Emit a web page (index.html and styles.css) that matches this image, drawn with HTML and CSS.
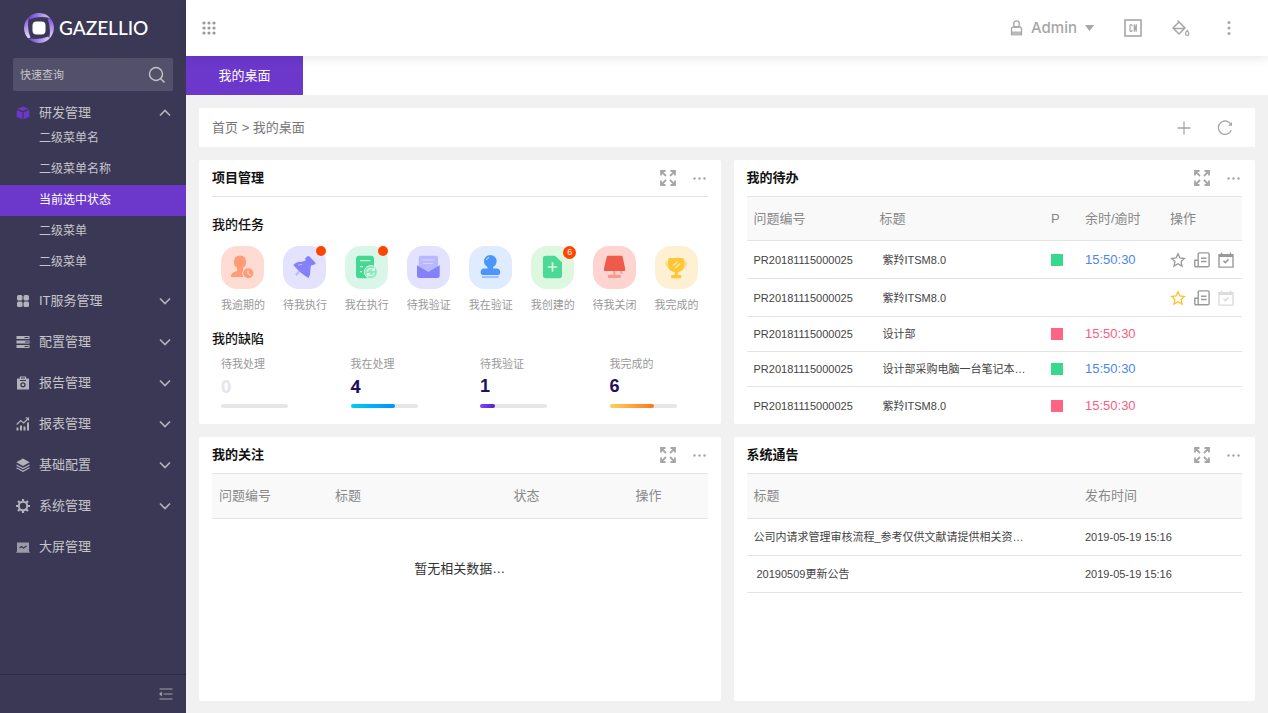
FILE: index.html
```html
<!DOCTYPE html>
<html lang="zh-CN">
<head>
<meta charset="utf-8">
<meta name="viewport" content="width=device-width, initial-scale=1">
<title>我的桌面</title>
<link rel="stylesheet" href="styles.css">
</head>
<body>
<svg class="sprite" aria-hidden="true">
  <symbol id="chevron" viewBox="0 0 12 8"><path d="M1 1.500 6 6.500l5-5" fill="none" stroke="currentColor" stroke-width="1.700"/></symbol>
  <symbol id="expand" viewBox="0 0 16 16"><path d="M1 5.500V1h4.500M1 1l5 5M10.500 1H15v4.500M15 1l-5 5M1 10.500V15h4.500M1 15l5-5M10.500 15H15v-4.500M15 15l-5-5" fill="none" stroke="currentColor" stroke-width="1.800"/></symbol>
  <symbol id="more" viewBox="0 0 13 3"><circle cx="1.500" cy="1.500" r="1.200"/><circle cx="6.500" cy="1.500" r="1.200"/><circle cx="11.500" cy="1.500" r="1.200"/></symbol>
  <symbol id="star" viewBox="0 0 16 16"><path d="m8 1.800 1.900 4.200 4.500.5-3.300 3.100.9 4.500L8 11.800l-4 2.300.9-4.500L1.600 6.500 6.100 6z" fill="none" stroke="currentColor" stroke-width="1.300"/></symbol>
  <symbol id="note" viewBox="0 0 16 16"><path d="M4.200 14.800V2.200q0-1.300 1.300-1.300h8.300q1.300 0 1.300 1.300v11.300q0 1.300-1.300 1.300H2q-1.200 0-1.200-1.300V8.300h3.400M7 6.200h5.500M7 9.500h5.500" fill="none" stroke="currentColor" stroke-width="1.400"/></symbol>
  <symbol id="calendar" viewBox="0 0 16 16"><path d="M1 2.800h14v12.300H1zM1 4.200h14M3.500.5v3M12.500.5v3" fill="none" stroke="currentColor" stroke-width="1.400"/><path d="m5.500 8.800 1.800 1.800 3.200-3.200" fill="none" stroke="currentColor" stroke-width="1.500"/></symbol>
</svg>

<aside class="sidebar">
  <div class="logo">
    <svg width="32" height="32" viewBox="0 0 32 32" aria-hidden="true">
      <defs>
        <linearGradient id="ringA" x1="0" y1="0" x2="1" y2="0"><stop offset="0" stop-color="#6b3fd6"/><stop offset="1" stop-color="#d6caf5"/></linearGradient>
        <linearGradient id="ringB" x1="0" y1="1" x2="0" y2="0"><stop offset="0" stop-color="#e4dcf9"/><stop offset="1" stop-color="#7a50dc"/></linearGradient>
      </defs>
      <path d="M5.800 5A15 15 0 0 1 27 6Q16 3.500 6.500 7.500z" fill="url(#ringA)"/>
      <path d="M27 5.800A15 15 0 0 1 26 27Q28.500 16 24.500 6.500z" fill="url(#ringB)"/>
      <path d="M26.200 27A15 15 0 0 1 5 26Q16 28.500 25.500 24.500z" fill="url(#ringA)"/>
      <path d="M5 26.200A15 15 0 0 1 6 5Q3.500 16 7.500 25.500z" fill="url(#ringB)"/>
      <rect x="9.500" y="9.500" width="13" height="13" rx="4" fill="#fff"/>
    </svg>
    <span>GAZELLIO</span>
  </div>

  <form class="search">
    <input type="search" aria-label="快速查询" placeholder="快速查询">
    <button type="submit" aria-label="搜索"><svg width="18" height="18" viewBox="0 0 18 18" fill="none" stroke="currentColor" stroke-width="1.400"><circle cx="8" cy="8" r="6.500"/><path d="m12.700 12.700 3.800 3.800"/></svg></button>
  </form>

  <nav class="menu" aria-label="主菜单">
    <button class="group group-open" type="button" aria-expanded="true">
      <svg class="gi gi-on" viewBox="0 0 14 14" fill="currentColor"><path d="m7 .5 5.500 2.300L7 5 1.500 2.800zM.7 4 6.400 6.300v7L.7 10.700zM13.300 4 7.600 6.300v7l5.700-2.600z"/></svg>
      <span>研发管理</span><svg class="chev up"><use href="#chevron"/></svg>
    </button>
    <ul class="sub">
      <li><a href="#">二级菜单名</a></li>
      <li><a href="#">二级菜单名称</a></li>
      <li><a class="current" href="#" aria-current="page">当前选中状态</a></li>
      <li><a href="#">二级菜单</a></li>
      <li><a href="#">二级菜单</a></li>
    </ul>
    <button class="group" type="button">
      <svg class="gi" viewBox="0 0 14 14" fill="currentColor"><rect x="1" y="1" width="5.500" height="5.500" rx="1.500"/><rect x="7.500" y="1" width="5.500" height="5.500" rx="1.500"/><rect x="1" y="7.500" width="5.500" height="5.500" rx="1.500"/><rect x="7.500" y="7.500" width="5.500" height="5.500" rx="1.500"/></svg>
      <span>IT服务管理</span><svg class="chev"><use href="#chevron"/></svg>
    </button>
    <button class="group" type="button">
      <svg class="gi" viewBox="0 0 14 14"><path d="M.5 2.500h13M.5 7h13M.5 11.500h13" stroke="currentColor" stroke-width="3"/><path d="M8.500 2.500h4M9 7h4M8.500 11.500h4" stroke="#3b3856" stroke-width="1"/></svg>
      <span>配置管理</span><svg class="chev"><use href="#chevron"/></svg>
    </button>
    <button class="group" type="button">
      <svg class="gi" viewBox="0 0 14 14"><path d="M1 2.500h12v11H1z" fill="currentColor"/><path d="M4.500 3.500V1h5v2.500" fill="none" stroke="currentColor" stroke-width="1.200"/><path d="M4 4.500h6" stroke="#3b3856"/><circle cx="7" cy="8.800" r="2" fill="none" stroke="#3b3856" stroke-width="1.300"/></svg>
      <span>报告管理</span><svg class="chev"><use href="#chevron"/></svg>
    </button>
    <button class="group" type="button">
      <svg class="gi" viewBox="0 0 14 14"><path d="M1.500 10.500v3M5 8.500v5M8.500 9.500v4M12 5.500v8" stroke="currentColor" stroke-width="2"/><path d="m.7 7.500 4-4 3 2.500 4.500-4.500M9.500 1h3v2.500" fill="none" stroke="currentColor" stroke-width="1.200"/></svg>
      <span>报表管理</span><svg class="chev"><use href="#chevron"/></svg>
    </button>
    <button class="group" type="button">
      <svg class="gi" viewBox="0 0 14 14"><path d="m7 .5 6.700 3.700L7 8 .3 4.200z" fill="currentColor"/><path d="M.5 7 7 10.500 13.500 7M.5 9.800 7 13.300l6.500-3.500" fill="none" stroke="currentColor" stroke-width="1.200"/></svg>
      <span>基础配置</span><svg class="chev"><use href="#chevron"/></svg>
    </button>
    <button class="group" type="button">
      <svg class="gi" viewBox="0 0 14 14" fill="none" stroke="currentColor"><circle cx="7" cy="7" r="4.200" stroke-width="2"/><path d="M7 0v2.500M7 11.500V14M0 7h2.500M11.500 7H14M2 2l1.800 1.800M10.200 10.200 12 12M2 12l1.800-1.800M10.200 3.800 12 2" stroke-width="2.200"/></svg>
      <span>系统管理</span><svg class="chev"><use href="#chevron"/></svg>
    </button>
    <button class="group" type="button">
      <svg class="gi" viewBox="0 0 14 14"><path d="M1 2.500h12v9.300h.8v1H.2v-1H1z" fill="currentColor" opacity=".8"/><path d="m3.500 8 2-1.500 2 1.500 3-2" fill="none" stroke="#3b3856" stroke-width="1.200"/></svg>
      <span>大屏管理</span>
    </button>
  </nav>

  <div class="side-foot">
    <button type="button" aria-label="收起菜单"><svg width="14" height="12" viewBox="0 0 14 12"><path d="M.5 1h13M.5 11h13M4.500 6h9" stroke="currentColor" stroke-width="1.200"/><path d="m0 6 3-2.500v5z" fill="currentColor"/></svg></button>
  </div>
</aside>

<div class="page">
  <header class="topbar">
    <button class="apps" type="button" aria-label="应用"><svg width="14" height="14" viewBox="0 0 14 14" fill="#999"><circle cx="2" cy="2" r="1.600"/><circle cx="7" cy="2" r="1.600"/><circle cx="12" cy="2" r="1.600"/><circle cx="2" cy="7" r="1.600"/><circle cx="7" cy="7" r="1.600"/><circle cx="12" cy="7" r="1.600"/><circle cx="2" cy="12" r="1.600"/><circle cx="7" cy="12" r="1.600"/><circle cx="12" cy="12" r="1.600"/></svg></button>
    <button class="user" type="button">
      <svg width="13" height="16" viewBox="0 0 13 16"><rect x="3.700" y=".9" width="5.600" height="6.500" rx="2.800" fill="none" stroke="currentColor" stroke-width="1.300"/><path d="M1.500 15V9q0-2 2-2h6q2 0 2 2v6" fill="none" stroke="currentColor" stroke-width="1.300"/><path d="M1 11.500h11V15.500H1z" fill="currentColor" opacity=".8"/></svg>
      <span>Admin</span>
      <svg width="9" height="6" viewBox="0 0 9 6"><path d="M0 0h9L4.500 6z" fill="currentColor"/></svg>
    </button>
    <button type="button" aria-label="语言"><svg width="18" height="18" viewBox="0 0 18 18" fill="none" stroke="currentColor"><rect x="1" y="1" width="16" height="16" stroke-width="1.600"/><path d="M8 7.200V6.500Q8 5.500 7 5.500T6 6.500v5Q6 12.500 7 12.500t1-1v-.7M10.300 12.800V5.500l2 7V5.200" stroke-width="1.200"/></svg></button>
    <button type="button" aria-label="主题"><svg width="18" height="18" viewBox="0 0 18 18" fill="none" stroke="currentColor"><path d="M5.500 1.500 13 9l-6 6L1 9l6-6M1.500 9.500h11" stroke-width="1.500"/><path d="M15.200 11.500q1.700 2 1.700 3.200a1.700 1.700 0 0 1-3.400 0q0-1.200 1.700-3.200z" stroke-width="1.200"/></svg></button>
    <button type="button" aria-label="更多"><svg width="18" height="18" viewBox="0 0 18 18" fill="currentColor"><circle cx="9" cy="3.500" r="1.500"/><circle cx="9" cy="9" r="1.500"/><circle cx="9" cy="14.500" r="1.500"/></svg></button>
  </header>

  <div class="tabs"><a href="#" aria-current="page">我的桌面</a></div>

  <main class="content">
    <div class="crumbs">
      <nav aria-label="面包屑"><a href="#">首页</a> &gt; <a href="#">我的桌面</a></nav>
      <button type="button" aria-label="添加"><svg width="16" height="16" viewBox="0 0 16 16"><path d="M8 1.500v13M1.500 8h13" stroke="currentColor" stroke-width="1.300"/></svg></button>
      <button type="button" aria-label="刷新"><svg width="16" height="16" viewBox="0 0 16 16"><path d="M14.200 5A6.700 6.700 0 1 0 14.300 10.200" fill="none" stroke="currentColor" stroke-width="1.300"/><path d="M15 2v3.800h-3.800z" fill="currentColor"/></svg></button>
    </div>

    <div class="cards">
      <section class="card">
        <div class="card-head"><h2>项目管理</h2><button type="button" aria-label="展开"><svg width="16" height="16"><use href="#expand"/></svg></button><button type="button" aria-label="更多"><svg width="13" height="3" fill="currentColor"><use href="#more"/></svg></button></div>
        <h3 class="tasks-title">我的任务</h3>
        <ul class="tasks">
          <li><a href="#"><span class="tile t-orange">
            <svg viewBox="0 0 43 43"><ellipse cx="19" cy="16" rx="6.200" ry="6.600" fill="#ff9b76"/><path d="M16 20h6v4q5 1 6 3.500V31H9.800q0-4.500 6.200-6z" fill="#ff9b76"/><circle cx="27.300" cy="27.300" r="6" fill="#fedcd3"/><circle cx="27.300" cy="27.300" r="5" fill="#ff9b76"/><path d="M27 24.500v3l2.500 1.700" fill="none" stroke="#fedcd3" stroke-width="1.300"/></svg>
          </span>我逾期的</a></li>
          <li><a href="#"><span class="tile t-violet">
            <svg viewBox="0 0 43 43"><path d="m17.500 23.500-4 5" stroke="#bdbbfd" stroke-width="2.200" stroke-linecap="round"/><path d="m22 12.500 2.500-2.300q1-.7 2 .3l5.700 6q1 1.200 0 1.700l-4 1.300q-.8 1.500-.8 4.500 0 5-1.900 8-8-4.500-15.200-13 3.500-3.500 9-3.200l3.500-1.500z" fill="#8481fb"/><path d="M15 19.500q2-1.500 4-1" fill="none" stroke="#bdbbfd" stroke-width="1"/></svg><i class="dot"></i>
          </span>待我执行</a></li>
          <li><a href="#"><span class="tile t-green">
            <svg viewBox="0 0 43 43"><rect x="11" y="9.700" width="18" height="22.500" rx="3" fill="#43d991"/><path d="M15 14.700h10.500M15 20.700h3M15 25.700h2" stroke="#d9f6e8" stroke-width="1.300"/><circle cx="25.800" cy="26" r="6.500" fill="#8ae8bb" stroke="#d9f6e8"/><path d="M22.300 25.500q.7-3 3.500-3 2 0 3 1.700M29.200 21.800v2.700h-2.700M29.300 26.700q-.7 3-3.500 3-2 0-3-1.700M22.400 30.400v-2.700h2.700" fill="none" stroke="#e8fbf2" stroke-width="1.200"/></svg><i class="dot"></i>
          </span>我在执行</a></li>
          <li><a href="#"><span class="tile t-violet">
            <svg viewBox="0 0 43 43"><rect x="11.700" y="9.700" width="19.300" height="18" rx="2" fill="#bab8fd"/><path d="M14.500 14h13M16 17.500h10" stroke="#d4d3fe" stroke-width="1.200"/><path d="m10 19.200 11.300 6.700 11.400-6.700v10.600q0 2.200-2.200 2.200H12.200Q10 32 10 29.800z" fill="#8481fb"/></svg>
          </span>待我验证</a></li>
          <li><a href="#"><span class="tile t-blue">
            <svg viewBox="0 0 43 43"><circle cx="21.300" cy="15.300" r="6.300" fill="#4b95fc"/><path d="M18.500 20h5.600v2.500h3.500q3.500 0 3.500 3.500v1q0 2-2 2H13.700q-2 0-2-2v-1q0-3.500 3.500-3.500h3.300z" fill="#4b95fc"/><path d="M13 31h16.500" stroke="#9cc3fd" stroke-width="2.200"/><path d="M17.500 14q.5-2 2.500-2.500" fill="none" stroke="#dfebfe" stroke-width="1"/></svg>
          </span>我在验证</a></li>
          <li><a href="#"><span class="tile t-lime">
            <svg viewBox="0 0 43 43"><path d="M14.500 9.700H24l7 6.500v13.300q0 2.700-2.700 2.700H14.700Q12 32.200 12 29.500V12.400q0-2.700 2.500-2.700z" fill="#4ad996"/><path d="M21.500 16.300v9.400M16.800 21h9.400" stroke="#def8df" stroke-width="1.700"/></svg><i class="dot count">6</i>
          </span>我创建的</a></li>
          <li><a href="#"><span class="tile t-red">
            <svg viewBox="0 0 43 43"><path d="M21.400 24v6M28.300 24v3.700" stroke="#f99a8f" stroke-width="2"/><rect x="14.700" y="28.700" width="13.300" height="3.400" rx="1.700" fill="#f99a8f"/><path d="M15.200 9.700h13q1.200 0 1.500 1.200l2.600 12.400q.3 1.700-1.200 1.700H12q-1.500 0-1.200-1.700l2.900-12.400q.3-1.200 1.500-1.200z" fill="#ef5b4a"/></svg>
          </span>待我关闭</a></li>
          <li><a href="#"><span class="tile t-yellow">
            <svg viewBox="0 0 43 43"><path d="M10 15.500h5v7q-5-1-5-7zM32.400 15.500h-5v7q5-1 5-7z" fill="#fbdd98"/><path d="M15.500 12H27q2.300 0 2.300 2.300V19q0 6-6.500 7.200V29H26q1 1.700 0 3.300H16.500q-1-1.600 0-3.300h3.200v-2.800Q13 25 13 19v-4.700q0-2.300 2.500-2.300z" fill="#ffc636"/><path d="m18.300 19.500 4-3.500M20.500 22l4.500-4.500" stroke="#fde6b0" stroke-width="1.400"/></svg>
          </span>我完成的</a></li>
        </ul>
        <h3 class="bugs-title">我的缺陷</h3>
        <ul class="bugs">
          <li class="none"><span>待我处理</span><b class="narrow">0</b><div class="bar"></div></li>
          <li><span>我在处理</span><b class="narrow">4</b><div class="bar"><div class="b-blue" style="width:67%"></div></div></li>
          <li><span>待我验证</span><b>1</b><div class="bar"><div class="b-violet" style="width:22%"></div></div></li>
          <li><span>我完成的</span><b>6</b><div class="bar"><div class="b-orange" style="width:67%"></div></div></li>
        </ul>
      </section>

      <section class="card">
        <div class="card-head"><h2>我的待办</h2><button type="button" aria-label="展开"><svg width="16" height="16"><use href="#expand"/></svg></button><button type="button" aria-label="更多"><svg width="13" height="3" fill="currentColor"><use href="#more"/></svg></button></div>
        <table class="todo">
          <colgroup><col class="c-id"><col><col class="c-p"><col class="c-time"><col class="c-op"></colgroup>
          <thead><tr><th>问题编号</th><th>标题</th><th>P</th><th>余时/逾时</th><th>操作</th></tr></thead>
          <tbody>
            <tr><td>PR20181115000025</td><td class="name">紫羚ITSM8.0</td><td><i class="sq green"></i></td><td class="time blue">15:50:30</td><td><div class="ops"><button type="button" aria-label="收藏"><svg><use href="#star"/></svg></button><button type="button" aria-label="详情"><svg><use href="#note"/></svg></button><button type="button" aria-label="完成"><svg><use href="#calendar"/></svg></button></div></td></tr>
            <tr><td>PR20181115000025</td><td class="name">紫羚ITSM8.0</td><td></td><td></td><td><div class="ops"><button class="fav" type="button" aria-label="取消收藏"><svg><use href="#star"/></svg></button><button type="button" aria-label="详情"><svg><use href="#note"/></svg></button><button type="button" aria-label="完成" disabled><svg><use href="#calendar"/></svg></button></div></td></tr>
            <tr class="compact"><td>PR20181115000025</td><td class="name">设计部</td><td><i class="sq pink"></i></td><td class="time red">15:50:30</td><td></td></tr>
            <tr class="compact"><td>PR20181115000025</td><td class="name">设计部采购电脑一台笔记本…</td><td><i class="sq green"></i></td><td class="time blue">15:50:30</td><td></td></tr>
            <tr><td>PR20181115000025</td><td class="name">紫羚ITSM8.0</td><td><i class="sq pink"></i></td><td class="time red">15:50:30</td><td></td></tr>
          </tbody>
        </table>
      </section>

      <section class="card">
        <div class="card-head"><h2>我的关注</h2><button type="button" aria-label="展开"><svg width="16" height="16"><use href="#expand"/></svg></button><button type="button" aria-label="更多"><svg width="13" height="3" fill="currentColor"><use href="#more"/></svg></button></div>
        <table>
          <colgroup><col class="f-id"><col><col class="f-state"><col class="f-op"></colgroup>
          <thead><tr><th>问题编号</th><th>标题</th><th>状态</th><th>操作</th></tr></thead>
        </table>
        <p class="empty">暂无相关数据…</p>
      </section>

      <section class="card">
        <div class="card-head"><h2>系统通告</h2><button type="button" aria-label="展开"><svg width="16" height="16"><use href="#expand"/></svg></button><button type="button" aria-label="更多"><svg width="13" height="3" fill="currentColor"><use href="#more"/></svg></button></div>
        <table>
          <colgroup><col><col class="n-time"></colgroup>
          <thead><tr><th>标题</th><th>发布时间</th></tr></thead>
          <tbody>
            <tr><td>公司内请求管理审核流程_参考仅供文献请提供相关资…</td><td>2019-05-19 15:16</td></tr>
            <tr><td class="name">20190509更新公告</td><td>2019-05-19 15:16</td></tr>
          </tbody>
        </table>
      </section>
    </div>
  </main>
</div>
</body>
</html>
```
FILE: styles.css
```css
* { box-sizing: border-box; }

body {
  margin: 0;
  min-height: 100vh;
  display: flex;
  background: #f1f1f1;
  color: #333;
  font: 13px/20px "Liberation Sans", "Noto Sans CJK SC", sans-serif;
}

ul, h2, h3, p { margin: 0; padding: 0; }
ul { list-style: none; }
a { color: inherit; text-decoration: none; }
svg { display: block; flex: none; }
.sprite { position: absolute; width: 0; height: 0; }

button {
  display: flex;
  align-items: center;
  justify-content: center;
  padding: 0;
  border: 0;
  background: none;
  color: inherit;
  font: inherit;
  cursor: pointer;
}

/* Sidebar */
.sidebar {
  flex: none;
  width: 186px;
  display: flex;
  flex-direction: column;
  background: #3b3856;
  color: #c6c5c9;
}

.logo {
  height: 58px;
  padding: 0 0 2px 23px;
  display: flex;
  align-items: center;
  gap: 4px;
  color: #fff;
  font: 500 19px/24px Lato, sans-serif;
}

.search {
  display: flex;
  height: 33px;
  margin: 0 13px;
  padding: 0 7px;
  border-radius: 2px;
  background: #53506b;
}
.search input {
  flex: 1;
  min-width: 0;
  padding: 0;
  border: 0;
  outline: 0;
  background: none;
  color: inherit;
  font: 11px/16px "Liberation Sans", "Noto Sans CJK SC", sans-serif;
}
.search input::placeholder { color: #c6c5c9; opacity: 1; }

.menu { flex: 1; padding-top: 12px; }
.group {
  width: 100%;
  height: 41px;
  padding: 0 15px 0 16px;
  gap: 9px;
}
.group-open { height: 20px; }
.group span { flex: 1; text-align: left; }
.gi { width: 14px; height: 14px; color: #b3b2ba; }
.gi-on { color: #6b38cb; }
.chev { width: 12px; height: 8px; color: #b3b2ba; }
.up { transform: rotate(180deg); }
.sub { margin-bottom: 2px; font-size: 12px; line-height: 31px; }
.sub a { display: block; padding-left: 39px; }
.sub .current { background: #6b38cb; color: #fff; }

.side-foot {
  height: 39px;
  padding: 0 13px;
  display: flex;
  align-items: center;
  justify-content: flex-end;
  border-top: 1px solid #2e2a4c;
  color: #a09f9f;
}

/* Top bar and tabs */
.page { flex: 1; min-width: 0; display: flex; flex-direction: column; }

.topbar {
  position: relative;
  z-index: 1;
  height: 56px;
  padding: 0 30px 0 16px;
  display: flex;
  align-items: center;
  gap: 30px;
  background: #fff;
  color: #a6a6a6;
  box-shadow: 0 2px 10px rgba(0, 0, 0, .1);
}
.apps { margin-right: auto; }
.user { gap: 8px; font: 500 15px/20px Inter, sans-serif; }

.tabs { display: flex; background: #fff; }
.tabs a {
  width: 117px;
  line-height: 39px;
  text-align: center;
  background: #6b38cb;
  color: #fff;
}

/* Content */
.content {
  flex: 1;
  padding: 13px 13px 12px;
  display: flex;
  flex-direction: column;
  gap: 13px;
}

.crumbs {
  height: 39px;
  padding: 0 22px 0 13px;
  display: flex;
  align-items: center;
  gap: 25px;
  background: #fff;
  color: #a6a6a6;
}
.crumbs nav { margin-right: auto; color: #777; }

.cards {
  flex: 1;
  display: grid;
  grid-template-columns: repeat(2, minmax(0, 1fr));
  grid-auto-rows: 1fr;
  gap: 13px;
}
.card { padding: 0 13px; border-radius: 2px; background: #fff; }
.card-head {
  height: 37px;
  padding-right: 2px;
  display: flex;
  align-items: center;
  gap: 17px;
  border-bottom: 1px solid #e4e4e4;
  color: #a6a6a6;
}
.card-head h2 {
  margin-right: auto;
  color: #111;
  font-size: 13px;
  font-weight: 700;
}
h3 { color: #111; font-size: 13px; font-weight: 500; }

/* Tasks */
.tasks-title { margin-top: 18px; }
.tasks {
  display: grid;
  grid-template-columns: repeat(8, 1fr);
  margin-top: 11px;
  color: #999;
  font-size: 11px;
  line-height: 16px;
}
.tasks a { display: flex; flex-direction: column; align-items: center; gap: 8px; }
.tile { position: relative; width: 43px; height: 43px; border-radius: 16px; }
.t-orange { background: #fedcd3; }
.t-violet { background: #e3e2ff; }
.t-green { background: #d9f6e8; }
.t-blue { background: #dfebfe; }
.t-lime { background: #def8df; }
.t-red { background: #fed4d0; }
.t-yellow { background: #fef0d3; }
.dot {
  position: absolute;
  top: 0;
  right: 0;
  width: 10px;
  height: 10px;
  border-radius: 50%;
  background: #ff4500;
}
.count {
  right: -2px;
  width: 13px;
  height: 13px;
  color: #fff;
  font-size: 9px;
  font-style: normal;
  line-height: 13px;
  text-align: center;
}

.bugs-title { margin-top: 16px; }
.bugs {
  display: flex;
  justify-content: space-between;
  margin-top: 7px;
  padding: 0 31px 0 9px;
}
.bugs li { width: 67px; color: #23105c; }
.bugs span { display: block; color: #999; font-size: 11px; line-height: 16px; }
.bugs b { display: block; margin-top: 2px; font-size: 18px; line-height: 24px; }
.bugs .narrow { font-family: "Noto Sans", sans-serif; }
.bugs .none { color: #e6e5ec; }
.bar { height: 4px; margin-top: 6px; border-radius: 2px; background: #e6e6e8; }
.bar div { height: 4px; border-radius: 2px; }
.b-blue { background: linear-gradient(90deg, #00cdf0, #0091ff); }
.b-violet { background: linear-gradient(90deg, #8a43f5, #4b25c9); }
.b-orange { background: linear-gradient(90deg, #ffd257, #ff7420); }

/* Tables */
table { width: 100%; table-layout: fixed; border-collapse: separate; border-spacing: 0; }
th, td { padding: 0 0 0 7px; text-align: left; white-space: nowrap; border-bottom: 1px solid #e4e4e4; }
th { height: 45px; background: #f9f9f9; color: #888; font-weight: 400; }
td { height: 37px; color: #444; font-size: 11px; line-height: 16px; }
.todo th { height: 44px; }
.todo td { height: 38px; }
.todo .compact td { height: 35px; }
.todo tbody tr:last-child td { height: 37px; border-bottom: 0; }
.name { padding-left: 10px; }
.c-id { width: 126px; }
.c-p { width: 34px; }
.c-time { width: 85px; }
.c-op { width: 79px; }
.f-id { width: 116px; }
.f-state { width: 122px; }
.f-op { width: 79px; }
.n-time { width: 164px; }

.sq { display: block; width: 12px; height: 12px; }
.green { background: #36d98e; }
.pink { background: #ff6482; }
td.time { font-size: 13px; }
td.blue { color: #4a86f0; }
td.red { color: #f5607f; }

.ops { display: flex; gap: 8px; color: #999; }
.ops svg { width: 16px; height: 16px; }
.ops .fav { color: #ffc02e; }
.ops button:disabled { color: #dcdcdc; }

.empty { margin-top: 40px; text-align: center; }
```
